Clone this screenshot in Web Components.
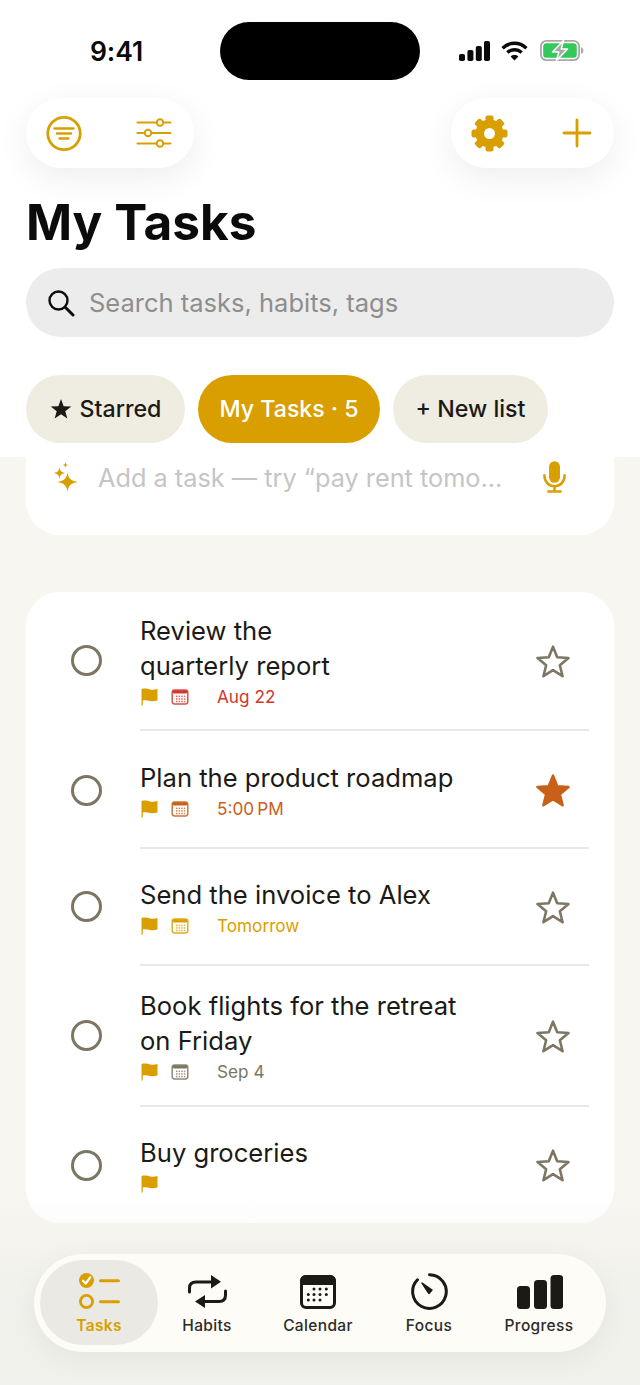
<!DOCTYPE html>
<html lang="en"><head><meta charset="utf-8"><title>My Tasks</title>
<style>
html,body{margin:0;padding:0;background:#f7f6f0;}
body{width:640px;height:1385px;overflow:hidden;font-family:Inter,"Liberation Sans",sans-serif;}
</style></head><body>
<task-app>
  <app-header slot="header"></app-header>
  <task-composer slot="composer"></task-composer>
  <task-list slot="list">
    <task-row h="139" date="Aug 22" tone="#d2362d" cal="#d2362d" pt="21">Review the<br>quarterly report</task-row>
    <task-row h="118" date="5:00&#8239;PM" tone="#c8601a" cal="#c8601a" starred pt="29" nudge="1">Plan the product roadmap</task-row>
    <task-row h="117" date="Tomorrow" tone="#d9a000" cal="#d9a000" pt="28">Send the invoice to Alex</task-row>
    <task-row h="141" date="Sep 4" tone="#7d7663" cal="#7d7663" pt="22">Book flights for the retreat<br>on Friday</task-row>
    <task-row h="116" last pt="28" nudge="1">Buy groceries</task-row>
  </task-list>
  <tab-bar slot="nav"></tab-bar>
</task-app>
<script>
const GOLD='#d99f00';
function gear(){let t='';for(let i=0;i<8;i++)t+=`<rect x="-4" y="-18" width="8" height="8" rx="2" transform="rotate(${i*45})"/>`;
return `<svg width="37" height="37" viewBox="-18.5 -18.5 37 37" fill="${GOLD}">${t}<circle r="9.750" fill="none" stroke="${GOLD}" stroke-width="8.500"/></svg>`;}
const starPts=(cx,cy,R,r)=>{let p=[];for(let i=0;i<10;i++){const a=-Math.PI/2+i*Math.PI/5,q=i%2?r:R;p.push((cx+q*Math.cos(a)).toFixed(2)+','+(cy+q*Math.sin(a)).toFixed(2));}return p.join(' ');};
function def(name,html){customElements.define(name,class extends HTMLElement{connectedCallback(){if(this.shadowRoot)return;const s=this.attachShadow({mode:'open'});s.innerHTML=typeof html==='function'?html(this):html;}});}

def('task-app',`<style>
:host{display:block;width:640px;height:1385px;position:relative;overflow:hidden;background:#f7f6f0;color:#1b1a16;}
.list{display:block;margin-top:57px;padding:0 26px;}
.comp{display:block;padding:0 26px;}
.nav{position:absolute;left:0;right:0;bottom:0;height:185px;pointer-events:none;background:linear-gradient(rgba(240,240,236,0),rgba(240,240,236,.95) 55%,rgba(240,240,236,.9));}
.navin{position:absolute;left:34px;top:54px;}
</style>
<slot name="header"></slot>
<div class="comp"><slot name="composer"></slot></div>
<div class="list"><slot name="list"></slot></div>
<div class="nav"><div class="navin"><slot name="nav"></slot></div></div>`);

def('status-bar',`<style>
:host{display:flex;height:58px;padding-top:22px;align-items:center;position:relative;}
.time{width:220px;text-align:center;box-sizing:border-box;padding-left:13px;font:600 26.500px/58px Inter,sans-serif;color:#0a0a0a;letter-spacing:-.1px;}
.island{width:200px;height:58px;border-radius:29px;background:#000;}
.r{display:flex;align-items:center;margin-left:39px;margin-top:-1px}
svg{display:block}
</style>
<div class="time">9:41</div><div class="island"></div>
<div class="r">
<svg width="31" height="20" viewBox="0 0 31 20" fill="#0a0a0a"><rect x="0" y="13" width="6" height="7" rx="1.8"/><rect x="8.4" y="9" width="6" height="11" rx="1.8"/><rect x="16.8" y="5" width="6" height="15" rx="1.8"/><rect x="25" y="0" width="6" height="20" rx="1.8"/></svg>
<svg width="27" height="20" viewBox="0 0 27 20" fill="none" stroke="#0a0a0a" stroke-width="3.4" style="margin-left:11px"><path d="M1.600 7.200C8.600.6 18.400.6 25.400 7.200"/><path d="M6.300 11.600C10.600 7.700 16.400 7.700 20.700 11.600"/><path d="M13.500 19.600L9.600 15.500C11.900 13.600 15.100 13.600 17.400 15.500Z" fill="#0a0a0a" stroke="none"/></svg>
<svg width="44" height="21" viewBox="0 0 44 21" style="margin-left:12px"><rect x=".9" y=".9" width="38.200" height="19.200" rx="5.500" fill="none" stroke="#a9a9a9" stroke-width="1.800"/><rect x="3.200" y="3.200" width="33.600" height="14.600" rx="3.400" fill="#34c759"/><path d="M41 7.200c1.600.4 2.400 1.600 2.400 3.300s-.8 2.900-2.400 3.300z" fill="#a9a9a9"/><path d="M23.500 .5L12.500 12h6.300L16.500 20.500 27.500 9h-6.300z" fill="#a9a9a9" stroke="#fff" stroke-width="1.500" stroke-linejoin="round"/></svg>
</div>`);

def('pill-group',`<style>
:host{display:flex;align-items:center;justify-content:space-between;box-sizing:border-box;height:70px;border-radius:35px;background:#fff;box-shadow:0 10px 34px rgba(0,0,0,.07);}
</style><slot></slot>`);

def('app-header',`<style>
:host{display:block;height:457px;background:#fff;position:relative;z-index:2;}
.tools{display:flex;justify-content:space-between;padding:18px 26px 0;}
.a{width:168px;padding:0 22px 0 20px;box-sizing:border-box;}
.b{width:163px;padding:0 22px 0 20px;box-sizing:border-box;}
h1{margin:24px 0 0 26px;font:700 49.500px/60px Inter,sans-serif;color:#0b0b0b;}
.search{margin:16px 26px 0;height:69px;border-radius:35px;background:#ececec;display:flex;align-items:center;padding-left:21px;gap:14px;font:400 25.500px/1 Inter,sans-serif;color:#8e8e8c;}
.chips{display:flex;gap:13px;margin:38px 26px 0;}
svg{display:block}
</style>
<status-bar></status-bar>
<div class="tools">
<pill-group class="a">
<svg width="37" height="37" viewBox="0 0 37 37" fill="none" stroke="${GOLD}"><circle cx="18" cy="18.500" r="16.200" stroke-width="2.800"/><path d="M8.500 13.500H27.500M11 18.500H25M13.500 23.500H22.500" stroke-width="2.400" stroke-linecap="round"/></svg>
<svg width="36" height="32" viewBox="0 0 36 32" fill="none" stroke="${GOLD}" stroke-width="2.200" stroke-linecap="round"><path d="M1.500 5.500H34.500M1.500 16H34.500M1.500 26.500H34.500"/><g fill="#fff" stroke-width="2"><circle cx="24" cy="5.500" r="3.200"/><circle cx="12" cy="16" r="3.200"/><circle cx="24" cy="26.500" r="3.200"/></g></svg>
</pill-group>
<pill-group class="b">${gear()}
<svg width="30" height="30" viewBox="0 0 30 30" stroke="${GOLD}" stroke-width="2.800" stroke-linecap="round"><path d="M15 2V28M2 15H28"/></svg>
</pill-group></div>
<h1>My Tasks</h1>
<div class="search"><svg width="28" height="28" viewBox="0 0 28 28" fill="none" stroke="#0d0d0d"><circle cx="11.500" cy="11.500" r="9" stroke-width="2.400"/><path d="M18.500 18.500L26 26" stroke-width="3" stroke-linecap="round"/></svg><span>Search tasks, habits, tags</span></div>
<div class="chips">
<list-chip w="159"><svg width="22" height="22" viewBox="0 0 22 22" fill="#1b1a16" style="margin-top:-2px"><polygon points="${starPts(11,11.800,10.800,4.500)}"/></svg>Starred</list-chip>
<list-chip w="182" active>My Tasks · 5</list-chip>
<list-chip w="155">+ New list</list-chip>
</div>`);

def('list-chip',h=>`<style>
:host{display:flex;align-items:center;justify-content:center;gap:8px;box-sizing:border-box;width:${h.getAttribute('w')}px;height:68px;padding-top:2px;border-radius:34px;background:${h.hasAttribute('active')?GOLD:'#efece1'};color:${h.hasAttribute('active')?'#fff':'#1b1a16'};font:450 23.200px/1 Inter,sans-serif;}
</style><slot></slot>`);

def('task-composer',`<style>
:host{display:flex;align-items:flex-start;box-sizing:border-box;height:78px;background:#fff;border-radius:0 0 34px 34px;padding:5px 48px 0 28px;}
span{font:400 25.300px/32px Inter,sans-serif;color:#c5c5c5;margin-left:20px;white-space:nowrap;flex:1}
svg{display:block}
</style>
<svg width="24" height="30" viewBox="0 0 24 30" fill="${GOLD}"><path d="M13.500 10C14.400 16.300 16.200 18.600 24 20 16.200 21.400 14.400 23.700 13.500 30 12.600 23.700 10.800 21.400 3 20 10.800 18.600 12.600 16.300 13.500 10Z"/><path d="M5.500 5C6 8.800 7 10 11 11 7 12 6 13.200 5.500 17 5 13.200 4 12 0 11 4 10 5 8.800 5.500 5Z"/><path d="M11.500 0C11.800 2.100 12.400 2.700 14.500 3 12.400 3.300 11.800 3.900 11.500 6 11.200 3.900 10.600 3.300 8.500 3 10.600 2.700 11.200 2.100 11.500 0Z"/></svg>
<span>Add a task — try “pay rent tomo...</span>
<svg width="23" height="33" viewBox="0 0 24 34" fill="none" stroke="${GOLD}" stroke-width="2.600" style="margin-top:-1px"><rect x="6.300" y="0" width="11.400" height="22.500" rx="5.700" fill="${GOLD}" stroke="none"/><path d="M1.500 13.500V15.500C1.500 21.500 6 26 12 26S22.500 21.500 22.500 15.500V13.500M12 26V31M4.500 31.700H19.500"/></svg>`);

def('task-list',`<style>
:host{display:block;height:631px;background:#fff;border-radius:34px;overflow:hidden;}
</style><slot></slot>`);

def('task-row',h=>{
const date=h.getAttribute('date'),tone=h.getAttribute('tone'),cal=h.getAttribute('cal');
const pt=h.getAttribute('pt'),star=h.hasAttribute('starred'),n=(+h.getAttribute('nudge')||0)*2;
const dots=[];for(let y=6.6;y<=12.2;y+=2.6)for(let x=5;x<=13;x+=2.6)dots.push(`<rect x="${x}" y="${y}" width="1.500" height="1.500"/>`);
return `<style>
:host{display:block;box-sizing:border-box;height:${h.getAttribute('h')}px;position:relative;}
.w{display:grid;grid-template-columns:114px 1fr 71px;height:100%;box-sizing:border-box;padding-right:25px;}
.c{display:flex;align-items:center;justify-content:flex-start;padding-left:45px;}
.c i{display:block;box-sizing:border-box;flex:none;width:31px;height:31px;border:3px solid #7d7663;border-radius:50%;margin-top:${n-2}px;}
.m{box-sizing:border-box;padding-top:${pt}px;${h.hasAttribute('last')?'':'border-bottom:2px solid #e9e8e5;'}grid-column:2 / 4;grid-row:1;}
.t{font:400 25.600px/35px Inter,sans-serif;color:#1b1a16;}
.meta{display:flex;align-items:center;height:22px;margin-top:3px;color:${tone};font:400 17.200px/22px Inter,sans-serif;}
.s{grid-column:3;grid-row:1;align-self:center;justify-self:start;margin-left:17px;margin-top:${n}px;position:relative;}
.cal{margin-left:13px;margin-right:28px}
svg{display:block}
</style>
<div class="w"><div class="c"><i></i></div>
<div class="m"><div class="t"><slot></slot></div>
<div class="meta"><svg width="18" height="18" viewBox="0 0 18 18" fill="${GOLD}"><path d="M1.500 1C5 0 8 1 10.500 1.500 13 2 15 1.800 17.500 1V12.500C15 13.300 12.500 13.500 10 13 7.500 12.500 5 11.800 2.800 12.500V17.500H1.500Z"/></svg>
${date?`<svg class="cal" width="18" height="16" viewBox="0 0 18 16" fill="${cal}"><rect x="1.200" y="1" width="15.600" height="14" rx="2.400" fill="#fff" stroke="${cal}" stroke-width="1.500" opacity=".85"/><rect x="1.500" y="1.200" width="15" height="3.200" rx="1.600"/><g opacity=".75">${dots.join('')}</g></svg><span>${date}</span>`:''}
</div></div>
<svg class="s" width="36" height="36" viewBox="0 0 36 36"><polygon points="${starPts(18,19,16.300,7.200)}" fill="${star?'#c8601a':'none'}" stroke="${star?'#c8601a':'#7d7663'}" stroke-width="2.600" stroke-linejoin="round"/></svg>
</div>`;});

def('tab-item',h=>{const a=h.hasAttribute('active');return `<style>
:host{display:flex;flex-direction:column;align-items:center;justify-content:flex-start;box-sizing:border-box;height:85px;padding-top:13px;border-radius:43px;${a?'background:#ebe9e3;':''}color:${a?GOLD:'#2c2b27'};font:${a?600:500} 15.500px/19px Inter,sans-serif;letter-spacing:.35px;}
.i{height:37px;margin-bottom:6px;display:flex;align-items:center;justify-content:center}
svg{display:block}
</style><div class="i"><slot name="i"></slot></div><div><slot></slot></div>`;});

def('tab-bar',()=>{
const rows=[[14,[14,20,26.3]],[19.5,[8.3,14,20,26.3]],[25,[8.3,14,20]]];
let d='';rows.forEach(([y,xs])=>xs.forEach(x=>d+=`<circle cx="${x}" cy="${y}" r="1.500"/>`));
return `<style>
:host{display:grid;grid-template-columns:118px 98px 124px 98px 122px;box-sizing:border-box;width:572px;height:98px;padding:6px 6px 7px;background:#fdfcf7;border-radius:49px;box-shadow:0 8px 30px rgba(0,0,0,.05);}
svg{display:block}
</style>
<tab-item active><svg slot="i" width="41" height="37" viewBox="0 0 41 37" fill="none" stroke="${GOLD}"><circle cx="7.500" cy="7.500" r="7.500" fill="${GOLD}" stroke="none"/><path d="M4 7.700L6.700 10.500 11.200 4.500" stroke="#fff" stroke-width="2.200" stroke-linecap="round" stroke-linejoin="round"/><circle cx="7.500" cy="28.500" r="6.100" stroke-width="2.800"/><path d="M21.500 7.700H39.500M21.500 28.700H39.500" stroke-width="3" stroke-linecap="round"/></svg>Tasks</tab-item>
<tab-item><svg slot="i" width="39" height="33" viewBox="0 0 39 33" fill="none" stroke="#1b1a16" stroke-width="3" stroke-linecap="round"><path d="M1.500 17V13Q1.500 7 8 7H25"/><path d="M37.500 16V20Q37.500 26.500 31 26.500H15"/><path d="M23 0L33 6.800 23 13.500Z" fill="#1b1a16" stroke="none"/><path d="M17 20L7 26.600 17 33Z" fill="#1b1a16" stroke="none"/></svg>Habits</tab-item>
<tab-item><svg slot="i" width="36" height="34" viewBox="0 0 36 34"><rect x="1.500" y="1.500" width="33" height="31" rx="4.500" fill="#fdfcf7" stroke="#1b1a16" stroke-width="3"/><path d="M1.500 8.500V6A4.500 4.500 0 0 1 6 1.500H30A4.500 4.500 0 0 1 34.500 6V8.500Z" fill="#1b1a16" stroke="#1b1a16" stroke-width="3" stroke-linejoin="round"/><g fill="#1b1a16">${d}</g></svg>Calendar</tab-item>
<tab-item><svg slot="i" width="37" height="37" viewBox="0 0 37 37" fill="none" stroke="#1b1a16" stroke-linecap="round" stroke-linejoin="round"><path d="M18.500 1.800A16.800 16.800 0 1 1 6.500 6.800" stroke-width="3"/><path d="M11 10L21 17 18 20.500Z" fill="#1b1a16" stroke-width="1.500"/></svg>Focus</tab-item>
<tab-item><svg slot="i" width="46" height="34" viewBox="0 0 46 34" fill="#1b1a16" style="margin-left:2px"><rect x="0" y="11" width="13" height="23" rx="3.500"/><rect x="17" y="5" width="13" height="29" rx="3.500"/><rect x="33.500" y="0" width="12.700" height="34" rx="3.500"/></svg>Progress</tab-item>`;});
</script>
</body></html>
